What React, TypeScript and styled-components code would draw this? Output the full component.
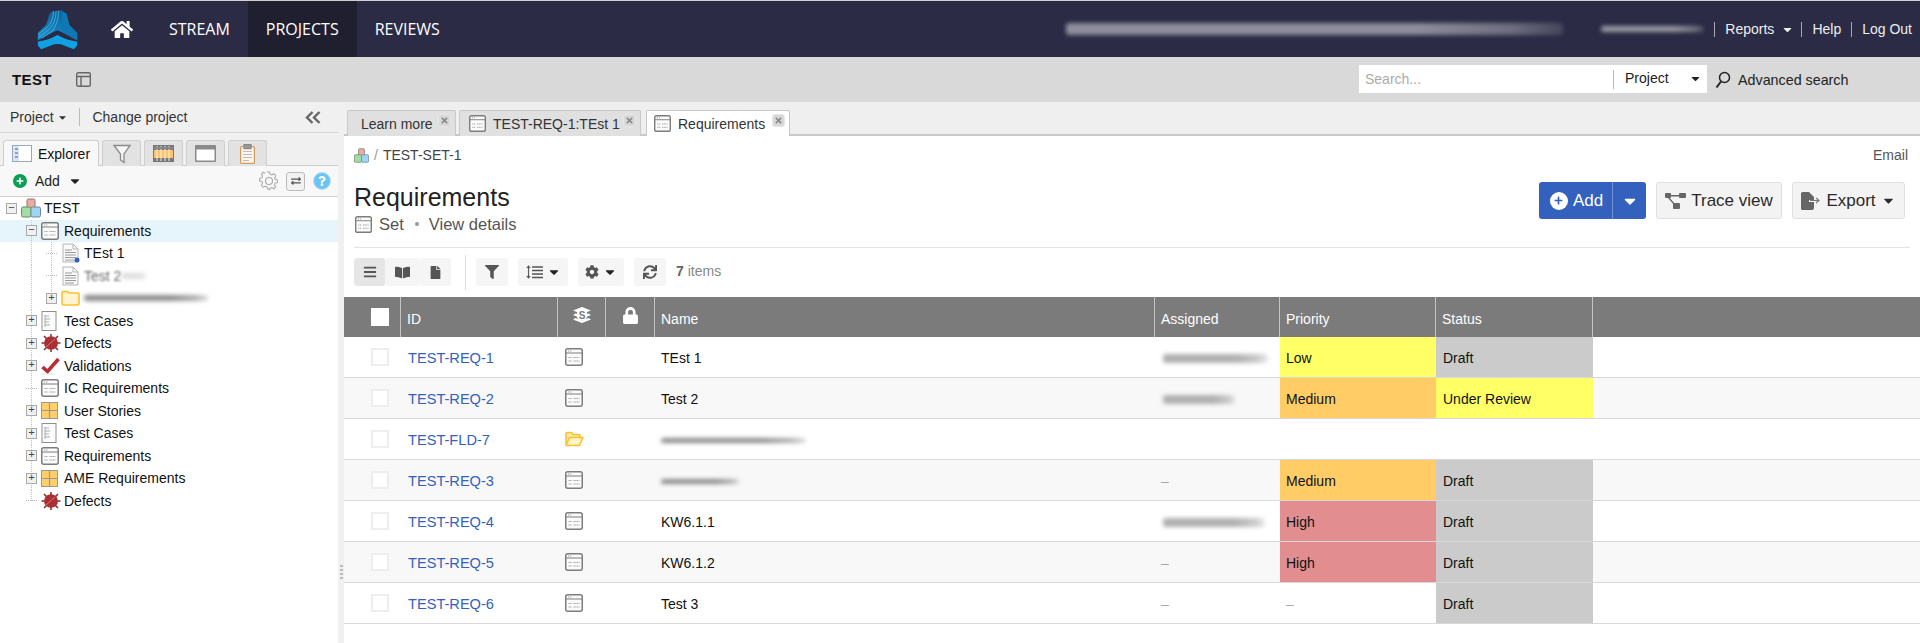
import React from "react";
import styled, { createGlobalStyle } from "styled-components";
import { FaHome, FaBars, FaBookOpen, FaFile, FaFilter, FaCog, FaSync, FaLock, FaCaretDown, FaTimes, FaPlus, FaQuestion, FaExchangeAlt } from "react-icons/fa";

const Global = createGlobalStyle`
  html, body { margin: 0; padding: 0; background: #fff; }
  body { font-family: "Liberation Sans", Arial, sans-serif; font-size: 14px; color: #222; }
  * { box-sizing: border-box; }
`;

const Page = styled.div`
  width: 1920px; height: 643px; overflow: hidden;
  display: flex; flex-direction: column;
  border-top: 1px solid #cfcfcf;
`;

/* ---------- top nav ---------- */
const Nav = styled.header`
  height: 56px; flex: none; background: #2b2b45; display: flex; align-items: stretch;
  padding-left: 37px; color: #fff;
`;
const LogoBox = styled.div`
  width: 41px; display: flex; align-items: center; margin-right: 33px; padding-top: 1px;
`;
const HomeLink = styled.div`
  width: 22px; display: flex; align-items: center; font-size: 23px; margin-right: 18px;
`;
const NavItem = styled.div<{ $active?: boolean }>`
  display: flex; align-items: center; padding: 0 18px;
  font-family: "Open Sans", sans-serif; font-size: 16px;
  background: ${p => (p.$active ? "#1f1f30" : "transparent")};
`;
const Spacer = styled.div` flex: 1; `;
const NavRight = styled.div`
  display: flex; align-items: center; padding-right: 8px; font-size: 14px; color: #eee;
`;
const NavLink = styled.span<{ $tight?: boolean }>`
  display: inline-flex; align-items: center; gap: 7px; margin-right: ${p => (p.$tight ? -3 : 0)}px;
`;
const NavSep = styled.span` width: 1px; height: 15px; background: #a8a8b8; margin: 0 10px; `;
const Smudge = styled.div<{ $w: number; $h?: number; $c?: string; $ml?: number }>`
  width: ${p => p.$w}px; height: ${p => p.$h ?? 7}px; margin-left: ${p => p.$ml ?? 0}px;
  background: linear-gradient(90deg, ${p => p.$c ?? "#8a8a8a"} 0 70%, ${p => p.$c ?? "#8a8a8a"}aa 90%, ${p => p.$c ?? "#8a8a8a"}44);
  filter: blur(2px); border-radius: 3px; flex: none;
`;

/* ---------- sub bar ---------- */
const SubBar = styled.div`
  height: 45px; flex: none; background: #d9d9d9; display: flex; align-items: center; padding-left: 12px;
`;
const ProjectName = styled.div` font-weight: 700; font-size: 15px; letter-spacing: .4px; color: #111; width: 64px; `;
const SearchBox = styled.div`
  width: 348px; height: 28px; background: #fff; display: flex; align-items: center; margin-top: -1px;
`;
const SearchPlaceholder = styled.span` width: 254px; padding-left: 6px; color: #aaa; font-size: 14px; `;
const SearchSep = styled.span` width: 1px; height: 19px; background: #bbb; `;
const SearchScope = styled.span`
  flex: 1; display: flex; justify-content: space-between; align-items: center;
  padding: 0 5px 0 11px; font-size: 14px; color: #222; position: relative; top: -1px;
`;
const AdvSearch = styled.div`
  display: flex; align-items: center; gap: 7px; margin-left: 8px; width: 205px; font-size: 14.3px; color: #222;
`;

/* ---------- body ---------- */
const Body = styled.div` flex: 1; display: flex; min-height: 0; `;
const Sidebar = styled.aside`
  width: 338px; flex: none; background: #f0f0f0; display: flex; flex-direction: column;
`;
const SideHead = styled.div`
  height: 31px; flex: none; display: flex; align-items: center; padding: 0 17px 0 10px;
  border-bottom: 1px solid #d4d4d4; font-size: 14px; color: #333;
`;
const SideDivider = styled.span` width: 1px; height: 18px; background: #bbb; margin: 0 12px 0 11px; `;
const SideTabs = styled.div`
  height: 33px; flex: none; padding: 7px 0 0 3px; display: flex; gap: 3px; border-bottom: 1px solid #cfcfcf;
`;
const SideTab = styled.div<{ $active?: boolean; $w: number }>`
  width: ${p => p.$w}px; height: 26px; display: flex; align-items: center; justify-content: center; gap: 6px;
  border: 1px solid #cfcfcf; border-bottom: 0; border-radius: 3px 3px 0 0; font-size: 14px; color: #111;
  background: ${p => (p.$active ? "#f8f8f8" : "#e2e2e2")};
`;
const AddRow = styled.div`
  height: 31px; flex: none; display: flex; align-items: center; padding: 0 7px 0 13px; background: #f8f8f8;
  border-bottom: 1px solid #cfcfcf; font-size: 14px; color: #222;
`;
const AddCaret = styled.span` display: inline-flex; margin-left: 8px; font-size: 14px; `;
const GreenDot = styled.span`
  width: 14px; height: 14px; border-radius: 50%; background: #0f9d58; color: #fff; font-size: 8px;
  display: inline-flex; align-items: center; justify-content: center; margin-right: 8px;
`;
const HelpDot = styled.span`
  width: 18px; height: 18px; border-radius: 50%; background: #6cc4f0; color: #fff; font-size: 10px;
  display: inline-flex; align-items: center; justify-content: center; border: 1px solid #b9dff0;
`;
const SyncBox = styled.span`
  width: 19px; height: 19px; border: 1px solid #bbb; border-radius: 3px; background: #f2f2f2; color: #555; font-size: 10px;
  display: inline-flex; align-items: center; justify-content: center; margin: 0 8px 0 7px;
`;
const Tree = styled.div` flex: 1; background: #fff; `;
const TreeRow = styled.div<{ $level: number; $sel?: boolean; $last?: boolean; $sub?: "full" | "half" }>`
  height: 22.5px; display: flex; align-items: center; padding-left: ${p => 6 + p.$level * 20}px;
  font-size: 14px; color: #111; white-space: nowrap;
  background-color: ${p => (p.$sel ? "#e6f5fc" : "transparent")};
  background-repeat: no-repeat;
  background-image:
    repeating-linear-gradient(to bottom, #c4c4c4 0 1px, transparent 1px 2px),
    repeating-linear-gradient(to bottom, #c4c4c4 0 1px, transparent 1px 2px);
  background-position: 31px 0, 51px 0;
  background-size:
    ${p => (p.$level === 0 ? "0 0" : p.$last ? "1px 50%" : "1px 100%")},
    ${p => (p.$sub === "full" ? "1px 100%" : p.$sub === "half" ? "1px 50%" : "0 0")};
`;
const Toggle = styled.span`
  width: 11px; height: 11px; flex: none; border: 1px solid #aaa; background: #f0f0f0; color: #444;
  display: flex; align-items: center; justify-content: center; font-size: 11px; line-height: 1;
  font-family: "Liberation Mono", monospace;
`;
const Connector = styled.span`
  width: 11px; flex: none; height: 1px;
  background-image: repeating-linear-gradient(to right, #bbb 0 1px, transparent 1px 2px);
`;
const IconSlot = styled.span`
  width: 23px; flex: none; margin-left: 4px; display: flex; align-items: center;
`;
const Ghost = styled.span` color: #666; filter: blur(.8px); `;
const Splitter = styled.div`
  width: 6px; flex: none; background: #f0f0f0; display: flex; align-items: flex-end; justify-content: center;
  padding-bottom: 64px;
`;
const Grip = styled.span`
  width: 3px; height: 14px;
  background-image: repeating-linear-gradient(to bottom, #bbb 0 2px, transparent 2px 4px);
`;

/* ---------- main ---------- */
const Main = styled.main` flex: 1; min-width: 0; display: flex; flex-direction: column; background: #fff; `;
const TabBar = styled.div`
  height: 34px; flex: none; background: #efefef; border-bottom: 2px solid #c8c8c8;
  padding: 8px 0 0 3px; display: flex; gap: 3px;
`;
const Tab = styled.div<{ $active?: boolean; $w: number; $ml?: number; $pl?: number }>`
  width: ${p => p.$w}px; margin-left: ${p => p.$ml ?? 0}px; height: 26px; display: flex; align-items: center;
  padding-left: ${p => p.$pl ?? 13}px; gap: 7px; font-size: 14px; color: #333; position: relative;
  border: 1px solid #c8c8c8; border-bottom: 0; border-radius: 2px 2px 0 0;
  background: ${p => (p.$active ? "#fff" : "#e0e0e0")};
`;
const TabClose = styled.span`
  position: absolute; right: 4px; top: 3px; width: 13px; height: 13px; border-radius: 3px;
  background: #d8d8d8; color: #8a8a8a; font-size: 9px; display: flex; align-items: center; justify-content: center;
  border: 1px solid #e8e8e8;
`;
const Content = styled.div` padding: 0 10px; flex: none; `;
const Crumb = styled.div`
  height: 18px; margin-top: 10px; display: flex; align-items: center; font-size: 14px; color: #444; padding-right: 2px;
`;
const CrumbSlash = styled.span` color: #999; margin: 0 5px; `;
const CrumbEnd = styled.span` margin-left: auto; color: #555; `;
const HeadRow = styled.div`
  height: 66px; margin-top: 18px; display: flex; justify-content: space-between; border-bottom: 1px solid #e4e4e4;
`;
const Title = styled.h1` margin: 0; font-weight: 400; font-size: 25px; line-height: 30px; color: #222; `;
const SubLine = styled.div`
  margin-top: 3px; height: 18px; display: flex; align-items: center; font-size: 16.5px; color: #555; padding-left: 1px;
`;
const SubKind = styled.span` margin-left: 7px; `;
const Bullet = styled.span` width: 4px; height: 4px; border-radius: 50%; background: #999; margin: 0 10px 0 11px; `;
const Actions = styled.div` display: flex; gap: 10px; padding-right: 5px; `;
const Primary = styled.div`
  height: 37px; width: 107px; display: flex; align-items: center; background: #3361bd; color: #fff;
  border-radius: 3px; font-size: 17px;
`;
const PrimaryMain = styled.span`
  width: 74px; height: 100%; display: flex; align-items: center; justify-content: center; gap: 5px;
  border-right: 1px solid #7393d4; padding-left: 2px;
`;
const PrimaryDot = styled.span`
  width: 18px; height: 18px; border-radius: 50%; background: #fff; color: #3361bd; font-size: 9px;
  display: flex; align-items: center; justify-content: center;
`;
const PrimaryCaret = styled.span` flex: 1; display: flex; justify-content: center; font-size: 18px; `;
const Secondary = styled.div<{ $w: number }>`
  height: 37px; width: ${p => p.$w}px; display: flex; align-items: center; justify-content: center; gap: 5px;
  background: #f3f3f3; border: 1px solid #e0e0e0; border-radius: 3px; font-size: 17px; color: #2a2a2a;
`;
const Toolbar = styled.div` height: 28px; margin: 10px 0 11px; display: flex; align-items: center; gap: 10px; `;
const Segment = styled.div` display: flex; height: 28px; `;
const SegBtn = styled.div<{ $active?: boolean; $w: number }>`
  width: ${p => p.$w}px; height: 28px; display: flex; align-items: center; justify-content: center;
  background: ${p => (p.$active ? "#e6e6e6" : "#f5f5f5")}; color: #555; font-size: 14px; border-radius: 3px;
`;
const ToolDivider = styled.span` width: 1px; height: 35px; background: #ddd; margin-left: 4px; flex: none; `;
const ToolBtn = styled.div<{ $w: number }>`
  width: ${p => p.$w}px; height: 28px; display: flex; align-items: center; justify-content: center; gap: 4px;
  background: #f5f5f5; color: #555; font-size: 14px; border-radius: 3px;
`;
const DarkCaret = styled.span` display: inline-flex; color: #222; `;
const Count = styled.span` font-size: 14px; color: #888; position: relative; top: -1px; b { color: #666; } `;

/* ---------- table ---------- */
const COLS = "57px 157px 48px 49px 500px 125px 156px 157px 1fr";
const Table = styled.div` display: flex; flex-direction: column; `;
const HeadGrid = styled.div`
  display: grid; grid-template-columns: ${COLS}; height: 40px; background: #7b7b7b; color: #fff; font-size: 14px;
`;
const HeadCell = styled.div`
  display: flex; align-items: center; padding: 3px 0 0 6px;
  border-right: 1px solid #c4c4c4;
  &:last-child { border-right: 0; }
`;
const HeadIconCell = styled.div`
  display: flex; align-items: center; justify-content: center; padding-bottom: 4px;
  border-right: 1px solid #c4c4c4;
`;
const BoxCell = styled.div` display: flex; align-items: center; padding-left: 27px; `;
const Check = styled.span<{ $head?: boolean }>`
  width: 18px; height: 18px; flex: none; background: #fff; border: ${p => (p.$head ? "0" : "2px solid #eee")};
`;
const HeadCheckCell = styled(BoxCell)` border-right: 1px solid #c4c4c4; `;
const Row = styled.div<{ $alt?: boolean }>`
  display: grid; grid-template-columns: ${COLS}; height: 41px;
  background: ${p => (p.$alt ? "#f8f8f8" : "#fff")}; border-bottom: 1px solid #d8d8d8;
  font-size: 14px; color: #111;
`;
const Cell = styled.div<{ $bg?: string; $pl?: number }>`
  display: flex; align-items: center; padding: 2px 0 0 ${p => p.$pl ?? 6}px; white-space: nowrap; overflow: hidden;
  background: ${p => p.$bg ?? "transparent"};
`;
const IdLink = styled.a` color: #3361bd; text-decoration: none; font-size: 14.6px; padding-left: 1px; `;
const IconCell = styled.div` display: flex; align-items: center; padding-left: 7px; `;
const Dash = styled.span` color: #aaa; `;

/* ---------- drawn icons ---------- */
const Req = ({ s = 18 }: { s?: number }) => (
  <svg width={s} height={s} viewBox="0 0 18 18" fill="none">
    <rect x=".75" y=".75" width="16.5" height="16.5" rx="2" fill="#fbfbfb" stroke="#7d7d7d" strokeWidth="1.5" />
    <path d="M1 5h16" stroke="#7d7d7d" />
    <path d="M3 3h1.200M5.200 3h1.200" stroke="#999" />
    <path d="M3.500 9.500h3M8.500 9.500h6M3.500 13h3M8.500 13h6" stroke="#999" strokeDasharray="1.200 .6" />
  </svg>
);
const Project = ({ s = 20 }: { s?: number }) => (
  <svg width={s} height={s} viewBox="0 0 20 20">
    <rect x="6" y="1" width="8" height="9" rx="1.5" fill="#eeaaa0" stroke="#8a7a70" />
    <rect x=".5" y="9" width="9.5" height="10" rx="1.5" fill="#a5dca5" stroke="#6a8a6a" />
    <rect x="10" y="9" width="9.5" height="10" rx="1.5" fill="#a0d4f5" stroke="#6a8a9a" />
  </svg>
);
const Doc = ({ dot }: { dot?: boolean }) => (
  <svg width="19" height="20" viewBox="0 0 19 20" fill="none">
    <path d="M2 1h10l5 5v13H2z" fill="#fafafa" stroke="#b5b5b5" />
    <path d="M12 1v5h5" stroke="#b5b5b5" />
    <path d="M4 7h7M4 9.5h11M4 12h11M4 14.5h11M4 17h9" stroke="#999" />
    {dot && <circle cx="16" cy="17" r="2.5" fill="#2f5fc0" />}
  </svg>
);
const Folder = ({ open }: { open?: boolean }) =>
  open ? (
    <svg width="19" height="16" viewBox="0 0 19 16" fill="none">
      <path d="M1 14V3a1.500 1.500 0 0 1 1.500-1.500h4L8 3.500h6a1 1 0 0 1 1 1V6" fill="#ffe9a8" stroke="#fcc22e" strokeWidth="1.600" />
      <path d="M1 14.500 4.500 6.500H18L14.500 14.500z" fill="#fff3c8" stroke="#fcc22e" strokeWidth="1.600" strokeLinejoin="round" />
    </svg>
  ) : (
    <svg width="19" height="16" viewBox="0 0 19 16" fill="none">
      <path d="M1 3a1.500 1.500 0 0 1 1.500-1.500h4L8 3h9a1 1 0 0 1 1 1v9.500a1.500 1.500 0 0 1-1.500 1.500h-14A1.500 1.500 0 0 1 1 13.500z" fill="#fff3d0" stroke="#fcc22e" strokeWidth="1.600" />
    </svg>
  );
const CaseDoc = () => (
  <svg width="16" height="20" viewBox="0 0 16 20" fill="none">
    <rect x="1" y=".5" width="14" height="19" fill="#fcfcfc" stroke="#8f8f8f" />
    <path d="M4 4v12M4 5h4M4 8h5M4 11h4M4 14h5" stroke="#aaa" />
  </svg>
);
const Bug = () => (
  <svg width="20" height="20" viewBox="0 0 20 20" fill="none">
    <g stroke="#8c2a2a" strokeWidth="1.500">
      <path d="M10 1v3M3 3l3 3M17 3l-3 3M.5 10h3M16.500 10h3M3 17l3-3M17 17l-3-3M10 16v3" />
    </g>
    <ellipse cx="10" cy="10" rx="7" ry="6.800" fill="#a92f33" />
    <path d="M5 14 14 6" stroke="#d97a7a" strokeWidth="1" />
  </svg>
);
const Tick = () => (
  <svg width="19" height="18" viewBox="0 0 19 18" fill="none">
    <path d="M1.500 10 6.500 14.500 17.500 2" stroke="#b53035" strokeWidth="3.600" />
    <path d="M0 17h13" stroke="#ddd" />
  </svg>
);
const Grid4 = () => (
  <svg width="17" height="17" viewBox="0 0 17 17">
    <rect x=".5" y=".5" width="16" height="16" fill="#ffd06a" stroke="#999" />
    <path d="M8.500 0v17M0 8.500h17" stroke="#999" strokeWidth="1.200" />
  </svg>
);
const LayoutIcon = () => (
  <svg width="15" height="15" viewBox="0 0 15 15" fill="none" stroke="#666" strokeWidth="1.400">
    <rect x=".7" y=".7" width="13.600" height="13.600" rx="1.500" />
    <path d="M1 4.500h13M5 5v9" />
  </svg>
);
const Logo = () => (
  <svg width="41" height="40" viewBox="38 26 124 122">
    <defs>
      <linearGradient id="lg" x1="0" y1="0" x2="0" y2="1">
        <stop offset="0" stopColor="#0f5f96" />
        <stop offset="1" stopColor="#1590cf" />
      </linearGradient>
    </defs>
    <path d="M84 30 112 27 128 38 136 72 160 96V118L122 98 100 88 78 98 40 118V96L66 70 76 36z" fill="url(#lg)" />
    <path d="M112 28 128 38 136 72 160 96V118L122 98 112 90Q116 60 112 28z" fill="#0f77b4" />
    <path d="M40 122Q70 118 88 108L100 102 112 108Q130 118 160 122V134L150 146 120 134Q100 126 80 134L50 146 40 134z" fill="#10a0e4" />
    <path d="M88 30Q86 60 72 76L42 100M96 29Q94 64 78 82L42 110M104 28Q102 68 84 90L52 112" stroke="#4fc0ee" strokeWidth="2.200" fill="none" />
  </svg>
);
const Magnifier = () => (
  <svg width="16" height="18" viewBox="0 0 16 18" fill="none" stroke="#222" strokeWidth="1.500">
    <circle cx="9.500" cy="6.500" r="5" />
    <path d="M6 10.500 1.500 16.500" strokeWidth="2" />
  </svg>
);
const Collapse = () => (
  <svg width="16" height="13" viewBox="0 0 16 13" fill="none" stroke="#666" strokeWidth="2.400">
    <path d="M7.500 1 2 6.500 7.500 12M14.500 1 9 6.500 14.500 12" />
  </svg>
);
const Funnel = () => (
  <svg width="18" height="20" viewBox="0 0 18 20" fill="#f4f4f4" stroke="#8a8a8a" strokeWidth="1.300">
    <path d="M1 1.500h16L11 10v8.500L7.500 16v-6z" />
  </svg>
);
const FilmTable = () => (
  <svg width="21" height="17" viewBox="0 0 21 17">
    <rect width="21" height="17" fill="#777" />
    <rect x="1" y="5" width="19" height="8" fill="#ffc46b" />
    <path d="M4 1v15M8 1v15M12 1v15M16 1v15" stroke="#f2f2f2" strokeWidth="1" />
    <rect x="1" y="2" width="19" height="2" fill="#888" />
  </svg>
);
const WindowIcon = () => (
  <svg width="21" height="17" viewBox="0 0 21 17">
    <rect width="21" height="17" rx="1" fill="#8a8a8a" />
    <rect x="1.500" y="4.500" width="18" height="11" fill="#fff" />
  </svg>
);
const Clipboard = () => (
  <svg width="15" height="20" viewBox="0 0 15 20" fill="#fdf6ec" stroke="#d09a60" strokeWidth="1.200">
    <rect x=".6" y="2.600" width="13.800" height="16.800" rx="1" />
    <rect x="4" y=".6" width="7" height="4" fill="#999" stroke="#888" />
    <path d="M3 7.500h9M3 10.500h9M3 13.500h9M3 16.500h6" stroke="#bbb" fill="none" />
  </svg>
);
const ExplorerIcon = () => (
  <svg width="20" height="17" viewBox="0 0 20 17" fill="none">
    <rect x=".5" y=".5" width="19" height="16" fill="#fff" stroke="#9aa8bc" />
    <rect x="1" y="1" width="6" height="15" fill="#dbe5f2" />
    <path d="M3 4h3M3 8h3M3 12h3" stroke="#6f8db5" strokeWidth="1.600" />
  </svg>
);
const StackS = () => (
  <svg width="18" height="16" viewBox="0 0 18 16" fill="#fff">
    <path d="M9 0 18 3.500 9 7 0 3.500z" />
    <path d="M9 9 2.500 6.500 0 8l9 3.500L18 8l-2.500-1.500z" />
    <path d="M9 13.500 2.500 11 0 12.500 9 16l9-3.500L15.500 11z" />
    <circle cx="9" cy="8" r="5.500" />
    <text x="9" y="11.500" textAnchor="middle" fontSize="10" fontWeight="700" fill="#7b7b7b" fontFamily="Liberation Sans">S</text>
  </svg>
);
const SortIcon = () => (
  <svg width="17" height="14" viewBox="0 0 17 14" fill="none" stroke="#555">
    <path d="M2.500 1v12M.8 3 2.500 1 4.200 3M.8 11l1.700 2 1.700-2" strokeWidth="1.100" />
    <path d="M6 2h11M6 5.500h11M6 9h11M6 12.500h11" strokeWidth="1.600" />
  </svg>
);
const TraceIcon = () => (
  <svg width="21" height="17" viewBox="0 0 21 17" fill="#666">
    <rect x="0" y="1" width="6" height="5" rx="1" />
    <rect x="14" y="1" width="7" height="5" rx="1" />
    <rect x="8" y="11" width="7" height="6" rx="1" />
    <path d="M5 3h10v1.500H5zM4 5l6 7-1 1-6-7z" />
  </svg>
);
const ExportIcon = () => (
  <svg width="20" height="18" viewBox="0 0 20 18" fill="#666">
    <path d="M1.500 0H8l5 5v3H8v2h5v6a2 2 0 0 1-2 2H1.500A1.500 1.500 0 0 1 0 16.500v-15A1.500 1.500 0 0 1 1.500 0z" />
    <path d="M9 8.500h8M15 6l3 2.500L15 11" fill="none" stroke="#777" strokeWidth="1.200" />
  </svg>
);
const GearOutline = () => (
  <svg width="20" height="20" viewBox="0 0 20 20" fill="none" stroke="#a8a8a8" strokeWidth="1.100">
    <path d="M8.500 1h3l.5 2.500 2 .9 2.200-1.400 2.100 2.100L17 7.300l.8 2 2.200.5v2.900l-2.300.5-.8 1.900 1.300 2.200-2.100 2-2.200-1.300-1.900.8-.5 2.200" transform="scale(.92)" />
    <path d="M11.500 19h-3l-.5-2.300-2-.9-2.100 1.400L1.800 15l1.300-2.200-.8-2L0 10.300V7.400l2.300-.5.8-1.900L1.800 2.800 3.900.8 6 2.100" transform="translate(.7 .5) scale(.92)" />
    <circle cx="10" cy="10" r="3.500" />
  </svg>
);
const Close = () => <TabClose><FaTimes /></TabClose>;

/* ---------- data ---------- */
type Node = { label?: string; level: number; icon: React.ReactNode; toggle?: "+" | "-"; sel?: boolean; smudge?: number; ghost?: string; sub?: "full" | "half"; last?: boolean };
const nodes: Node[] = [
  { label: "TEST", level: 0, icon: <Project />, toggle: "-" },
  { label: "Requirements", level: 1, icon: <Req />, toggle: "-", sel: true },
  { label: "TEst 1", level: 2, icon: <Doc dot />, sub: "full" },
  { ghost: "Test 2", level: 2, icon: <Doc />, sub: "full", smudge: 26 },
  { level: 2, icon: <Folder />, toggle: "+", smudge: 124, sub: "half" },
  { label: "Test Cases", level: 1, icon: <CaseDoc />, toggle: "+" },
  { label: "Defects", level: 1, icon: <Bug />, toggle: "+" },
  { label: "Validations", level: 1, icon: <Tick />, toggle: "+" },
  { label: "IC Requirements", level: 1, icon: <Req /> },
  { label: "User Stories", level: 1, icon: <Grid4 />, toggle: "+" },
  { label: "Test Cases", level: 1, icon: <CaseDoc />, toggle: "+" },
  { label: "Requirements", level: 1, icon: <Req />, toggle: "+" },
  { label: "AME Requirements", level: 1, icon: <Grid4 />, toggle: "+" },
  { label: "Defects", level: 1, icon: <Bug />, last: true },
];

type Rec = { id: string; folder?: boolean; name?: string; nameBlur?: number; who?: number; pr?: string; st?: string };
const PR: Record<string, string> = { Low: "#ffff66", Medium: "#ffcc66", High: "#e28e90" };
const ST: Record<string, string> = { Draft: "#cbcbcb", "Under Review": "#ffff66" };
const recs: Rec[] = [
  { id: "TEST-REQ-1", name: "TEst 1", who: 105, pr: "Low", st: "Draft" },
  { id: "TEST-REQ-2", name: "Test 2", who: 72, pr: "Medium", st: "Under Review" },
  { id: "TEST-FLD-7", folder: true, nameBlur: 145 },
  { id: "TEST-REQ-3", nameBlur: 78, pr: "Medium", st: "Draft" },
  { id: "TEST-REQ-4", name: "KW6.1.1", who: 102, pr: "High", st: "Draft" },
  { id: "TEST-REQ-5", name: "KW6.1.2", pr: "High", st: "Draft" },
  { id: "TEST-REQ-6", name: "Test 3", st: "Draft" },
];

export default function App() {
  return (
    <>
      <Global />
      <Page>
        <Nav>
          <LogoBox><Logo /></LogoBox>
          <HomeLink><FaHome /></HomeLink>
          <NavItem>STREAM</NavItem>
          <NavItem $active>PROJECTS</NavItem>
          <NavItem>REVIEWS</NavItem>
          <Spacer />
          <NavRight>
            <Smudge $w={497} $h={12} $c="#8e8e9c" />
            <Smudge $w={103} $h={6} $c="#9a9aa6" $ml={38} />
            <NavSep />
            <NavLink $tight>Reports <FaCaretDown size={13} /></NavLink>
            <NavSep />
            <NavLink>Help</NavLink>
            <NavSep />
            <NavLink>Log Out</NavLink>
          </NavRight>
        </Nav>
        <SubBar>
          <ProjectName>TEST</ProjectName>
          <LayoutIcon />
          <Spacer />
          <SearchBox>
            <SearchPlaceholder>Search...</SearchPlaceholder>
            <SearchSep />
            <SearchScope>Project <FaCaretDown size={13} /></SearchScope>
          </SearchBox>
          <AdvSearch><Magnifier /> Advanced search</AdvSearch>
        </SubBar>
        <Body>
          <Sidebar>
            <SideHead>
              Project&nbsp;<FaCaretDown size={11} />
              <SideDivider />
              Change project
              <Spacer />
              <Collapse />
            </SideHead>
            <SideTabs>
              <SideTab $active $w={96}><ExplorerIcon /> Explorer</SideTab>
              <SideTab $w={39}><Funnel /></SideTab>
              <SideTab $w={39}><FilmTable /></SideTab>
              <SideTab $w={39}><WindowIcon /></SideTab>
              <SideTab $w={39}><Clipboard /></SideTab>
            </SideTabs>
            <AddRow>
              <GreenDot><FaPlus /></GreenDot>
              Add
              <AddCaret><FaCaretDown /></AddCaret>
              <Spacer />
              <GearOutline />
              <SyncBox><FaExchangeAlt /></SyncBox>
              <HelpDot><FaQuestion /></HelpDot>
            </AddRow>
            <Tree>
              {nodes.map((n, i) => (
                <TreeRow key={i} $level={n.level} $sel={n.sel} $last={n.last} $sub={n.sub}>
                  {n.toggle ? <Toggle>{n.toggle === "+" ? "+" : "−"}</Toggle> : <Connector />}
                  <IconSlot>{n.icon}</IconSlot>
                  {n.label}
                  {n.ghost && <Ghost>{n.ghost}</Ghost>}
                  {n.smudge && <Smudge $w={n.smudge} $h={6} $c={n.ghost ? "#dddddd" : "#8a8a8a"} />}
                </TreeRow>
              ))}
            </Tree>
          </Sidebar>
          <Splitter><Grip /></Splitter>
          <Main>
            <TabBar>
              <Tab $w={109}>Learn more<Close /></Tab>
              <Tab $w={182} $pl={9}><Req s={17} />TEST-REQ-1:TEst 1<Close /></Tab>
              <Tab $w={144} $ml={2} $pl={7} $active><Req s={17} />Requirements<Close /></Tab>
            </TabBar>
            <Content>
              <Crumb>
                <Project s={15} />
                <CrumbSlash>/</CrumbSlash>
                TEST-SET-1
                <CrumbEnd>Email</CrumbEnd>
              </Crumb>
              <HeadRow>
                <div>
                  <Title>Requirements</Title>
                  <SubLine>
                    <Req s={17} />
                    <SubKind>Set</SubKind>
                    <Bullet />
                    View details
                  </SubLine>
                </div>
                <Actions>
                  <Primary>
                    <PrimaryMain><PrimaryDot><FaPlus /></PrimaryDot>Add</PrimaryMain>
                    <PrimaryCaret><FaCaretDown /></PrimaryCaret>
                  </Primary>
                  <Secondary $w={126}><TraceIcon />Trace view</Secondary>
                  <Secondary $w={113}><ExportIcon />Export<FaCaretDown size={15} /></Secondary>
                </Actions>
              </HeadRow>
              <Toolbar>
                <Segment>
                  <SegBtn $active $w={31}><FaBars /></SegBtn>
                  <SegBtn $w={34}><FaBookOpen size={15} /></SegBtn>
                  <SegBtn $w={32}><FaFile size={13} /></SegBtn>
                </Segment>
                <ToolDivider />
                <ToolBtn $w={32}><FaFilter /></ToolBtn>
                <ToolBtn $w={50}><SortIcon /><DarkCaret><FaCaretDown /></DarkCaret></ToolBtn>
                <ToolBtn $w={46}><FaCog /><DarkCaret><FaCaretDown /></DarkCaret></ToolBtn>
                <ToolBtn $w={32}><FaSync /></ToolBtn>
                <Count><b>7</b> items</Count>
              </Toolbar>
            </Content>
            <Table>
              <HeadGrid>
                <HeadCheckCell><Check $head /></HeadCheckCell>
                <HeadCell>ID</HeadCell>
                <HeadIconCell><StackS /></HeadIconCell>
                <HeadIconCell><FaLock size={17} /></HeadIconCell>
                <HeadCell>Name</HeadCell>
                <HeadCell>Assigned</HeadCell>
                <HeadCell>Priority</HeadCell>
                <HeadCell>Status</HeadCell>
                <HeadCell />
              </HeadGrid>
              {recs.map((r, i) => (
                <Row key={r.id} $alt={i % 2 === 1}>
                  <BoxCell><Check /></BoxCell>
                  <Cell><IdLink>{r.id}</IdLink></Cell>
                  <IconCell>{r.folder ? <Folder open /> : <Req />}</IconCell>
                  <Cell />
                  <Cell>
                    {r.name}
                    {r.nameBlur && <Smudge $w={r.nameBlur} $h={5} $c="#8c8c8c" />}
                  </Cell>
                  <Cell>
                    {r.who ? <Smudge $w={r.who} $h={9} $c="#b0b0b0" $ml={2} /> : !r.folder && <Dash>–</Dash>}
                  </Cell>
                  <Cell $bg={r.pr ? PR[r.pr] : undefined}>{r.pr ?? (!r.folder && <Dash>–</Dash>)}</Cell>
                  <Cell $bg={r.st ? ST[r.st] : undefined} $pl={7}>{r.st}</Cell>
                  <Cell />
                </Row>
              ))}
            </Table>
          </Main>
        </Body>
      </Page>
    </>
  );
}
